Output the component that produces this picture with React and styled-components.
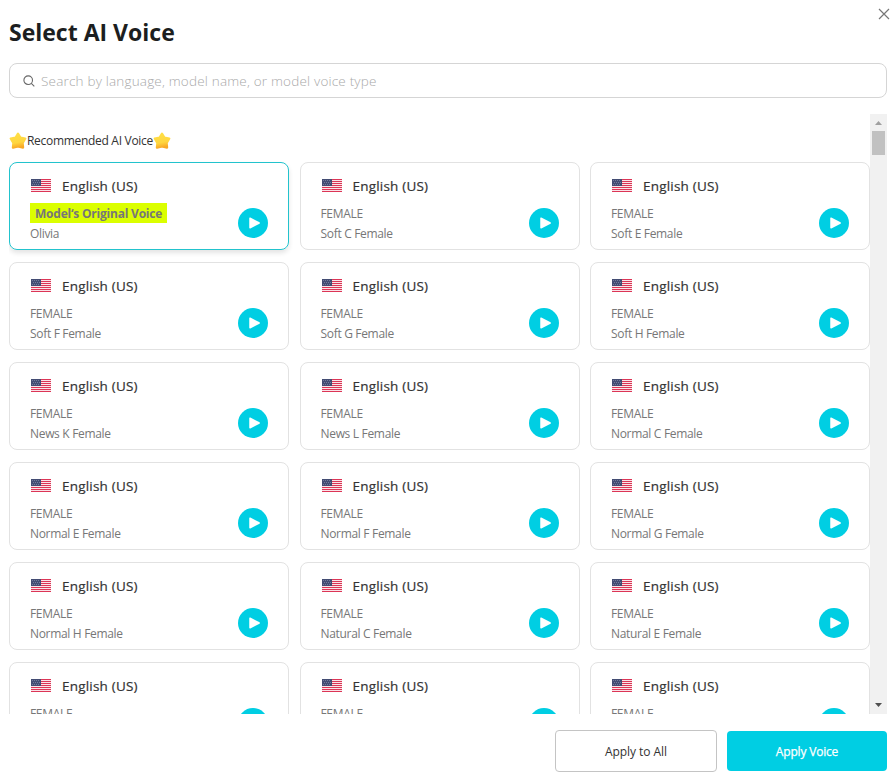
import React from "react";
import styled, { createGlobalStyle, css } from "styled-components";

const Global = createGlobalStyle`
  * { box-sizing: border-box; }
  body { margin: 0; background: #fff; font-family: "Open Sans", "Noto Sans", sans-serif; }
`;

const Dialog = styled.main`
  width: 895px;
  height: 783px;
  padding: 0 8px 0 9px;
  display: flex;
  flex-direction: column;
  overflow: hidden;
  background: #fff;
`;

const Header = styled.header`
  height: 63px;
  flex: none;
  display: flex;
  justify-content: space-between;
`;

const Title = styled.h1`
  margin: 16px 0 0;
  font-size: 23px;
  line-height: 32px;
  font-weight: 700;
  letter-spacing: 0;
  color: #1c1e20;
`;

const CloseButton = styled.button`
  width: 12px;
  height: 12px;
  margin: 8px -3px 0 0;
  padding: 0;
  border: 0;
  background: none;
  svg { display: block; }
`;

const SearchBox = styled.label`
  height: 35px;
  flex: none;
  display: flex;
  align-items: center;
  gap: 6px;
  padding-left: 13px;
  border: 1px solid #d5d5d5;
  border-radius: 8px;
`;

const SearchInput = styled.input`
  flex: 1;
  height: 30px;
  padding: 0;
  border: 0;
  outline: 0;
  background: transparent;
  font: 300 13.5px "Open Sans", sans-serif;
  letter-spacing: 0.19px;
  &::placeholder { color: #a9a9a9; opacity: 1; }
`;

const ScrollArea = styled.section`
  height: 600px;
  flex: none;
  margin-top: 16px;
  display: flex;
  overflow: hidden;
`;

const Content = styled.div`
  width: 861px;
  flex: none;
`;

const SectionTitle = styled.h2`
  height: 48px;
  margin: 0;
  padding-top: 5px;
  display: flex;
  align-items: center;
  font-size: 12px;
  font-weight: 400;
  letter-spacing: -0.3px;
  color: #333;
`;

const Grid = styled.div`
  display: grid;
  grid-template-columns: repeat(3, 280px);
  justify-content: space-between;
  row-gap: 12px;
`;

const Card = styled.article`
  height: 88px;
  padding: 12px 20px 0;
  display: flex;
  justify-content: space-between;
  border: 1px solid #e2e2e2;
  border-radius: 8px;
  ${(p) => p.$selected && css`
    border-color: #22c3cd;
    box-shadow: 0 3px 5px rgba(0, 0, 0, 0.11);
  `}
`;

const Details = styled.div`
  display: flex;
  flex-direction: column;
  align-items: flex-start;
`;

const Language = styled.h3`
  height: 22px;
  margin: 0 0 6px;
  display: flex;
  align-items: center;
  gap: 10px;
  font-size: 13.5px;
  line-height: 22px;
  font-weight: 400;
  letter-spacing: 0.2px;
  -webkit-text-stroke: 0.2px #333;
  color: #333;
  svg { margin-top: -1px; }
`;

const Meta = styled.div`
  height: 20px;
  font-size: 12px;
  line-height: 22px;
  letter-spacing: -0.32px;
  color: #777;
`;

const Original = styled(Meta)`
  padding: 0 5px;
  font-weight: 700;
  letter-spacing: -0.22px;
  background: #dbff00;
`;

const PlayButton = styled.button`
  width: 30px;
  height: 30px;
  margin-top: 33px;
  padding: 0;
  border: 0;
  border-radius: 50%;
  background: #00cee3;
  svg { display: block; }
`;

const Scrollbar = styled.div`
  width: 17px;
  height: 600px;
  flex: none;
  display: flex;
  flex-direction: column;
  align-items: center;
  justify-content: space-between;
  background: #f1f1f1;
`;

const ScrollTop = styled.div`
  display: flex;
  flex-direction: column;
  align-items: center;
`;

const Thumb = styled.div`
  width: 13px;
  height: 24px;
  background: #c1c1c1;
`;

const Footer = styled.footer`
  flex: 1;
  padding-top: 16px;
  display: flex;
  justify-content: flex-end;
  align-items: flex-start;
  gap: 10px;
`;

const Action = styled.button`
  width: ${(p) => (p.$primary ? 160 : 162)}px;
  height: ${(p) => (p.$primary ? 40 : 42)}px;
  margin-top: ${(p) => (p.$primary ? 1 : 0)}px;
  padding: 0;
  border: ${(p) => (p.$primary ? "0" : "1px solid #c4c4c4")};
  border-radius: 4px;
  background: ${(p) => (p.$primary ? "#00cee3" : "#fff")};
  color: ${(p) => (p.$primary ? "#fff" : "#333")};
  font: 400 12px "Open Sans", sans-serif;
  letter-spacing: ${(p) => (p.$primary ? -0.18 : -0.05)}px;
  -webkit-text-stroke: ${(p) => (p.$primary ? "0.25px #fff" : "0")};
`;

const StarIcon = () => (
  <svg width="18" height="18" viewBox="0 0 18 18" aria-hidden="true">
    <defs>
      <linearGradient id="star" x1="0.3" y1="0" x2="0.5" y2="1">
        <stop offset="0" stopColor="#ffdf45" />
        <stop offset="0.65" stopColor="#ffd640" />
        <stop offset="1" stopColor="#f9a825" />
      </linearGradient>
    </defs>
    <path d="M9 1.6 11.4 5.5 16.3 6.5 13.7 11 14.1 15.6 9 14.4 3.9 15.6 4.3 11 1.7 6.5 6.6 5.5Z" fill="url(#star)" stroke="url(#star)" strokeWidth="2.2" strokeLinejoin="round" />
  </svg>
);

const FlagIcon = () => (
  <svg width="22" height="13" viewBox="0 0 22 13" shapeRendering="crispEdges" aria-hidden="true">
    <rect x="1" width="20" height="13" fill="#fae3e8" />
    {[0, 2, 4, 6, 8, 10, 12].map((y) => (
      <rect key={y} x="1" y={y} width="20" height="1" fill="#dc3556" />
    ))}
    <rect x="1" width="10" height="7" fill="#434c73" />
    {[1, 3, 5].map((y) => (
      [2, 4, 6, 8].map((x) => (
        <rect key={`${x}-${y}`} x={y === 3 ? x + 1 : x} y={y} width="1" height="1" fill="#737b9b" />
      ))
    ))}
  </svg>
);

const PlayIcon = () => (
  <svg width="30" height="30" viewBox="0 0 30 30" aria-hidden="true">
    <path d="M12 10.2v9.6l9.2-4.8z" fill="#fff" stroke="#fff" strokeWidth="1.5" strokeLinejoin="round" />
  </svg>
);

const SearchIcon = () => (
  <svg width="12" height="12" viewBox="0 0 12 12" fill="none" stroke="#666" strokeWidth="1.1" aria-hidden="true">
    <circle cx="5.2" cy="5.2" r="4.3" />
    <path d="m8.3 8.3 3 3" />
  </svg>
);

const CloseIcon = () => (
  <svg width="12" height="12" viewBox="0 0 12 12" stroke="#777" strokeWidth="1.2" aria-hidden="true">
    <path d="m1 1 10 10M11 1 1 11" />
  </svg>
);

const Arrow = ({ down }) => (
  <svg width="17" height="17" viewBox="0 0 17 17" aria-hidden="true">
    <path d={down ? "M5 6h7L8.5 10z" : "M5 11h7L8.5 7z"} fill={down ? "#505050" : "#a0a0a0"} />
  </svg>
);

const voices = [
  "Olivia", "Soft C Female", "Soft E Female",
  "Soft F Female", "Soft G Female", "Soft H Female",
  "News K Female", "News L Female", "Normal C Female",
  "Normal E Female", "Normal F Female", "Normal G Female",
  "Normal H Female", "Natural C Female", "Natural E Female",
];

const VoiceCard = ({ name, selected }) => (
  <Card $selected={selected}>
    <Details>
      <Language><FlagIcon />English (US)</Language>
      {selected ? <Original>Model‘s Original Voice</Original> : <Meta>FEMALE</Meta>}
      {name && <Meta>{name}</Meta>}
    </Details>
    <PlayButton aria-label={`Play ${name || "voice"}`}><PlayIcon /></PlayButton>
  </Card>
);

export default function App() {
  return (
    <>
      <Global />
      <Dialog>
        <Header>
          <Title>Select AI Voice</Title>
          <CloseButton aria-label="Close"><CloseIcon /></CloseButton>
        </Header>
        <SearchBox>
          <SearchIcon />
          <SearchInput placeholder="Search by language, model name, or model voice type" />
        </SearchBox>
        <ScrollArea>
          <Content>
            <SectionTitle><StarIcon />Recommended AI Voice<StarIcon /></SectionTitle>
            <Grid>
              {voices.map((name, i) => <VoiceCard key={name} name={name} selected={i === 0} />)}
              <VoiceCard />
              <VoiceCard />
              <VoiceCard />
            </Grid>
          </Content>
          <Scrollbar>
            <ScrollTop><Arrow /><Thumb /></ScrollTop>
            <Arrow down />
          </Scrollbar>
        </ScrollArea>
        <Footer>
          <Action>Apply to All</Action>
          <Action $primary>Apply Voice</Action>
        </Footer>
      </Dialog>
    </>
  );
}
